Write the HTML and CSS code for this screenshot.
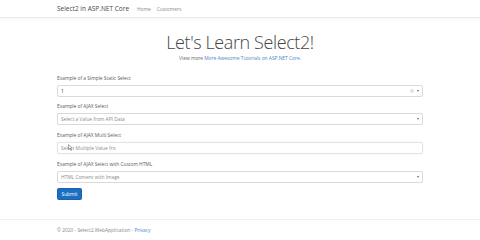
FILE: index.html
```html
<!DOCTYPE html>
<html>
<head>
<meta charset="utf-8">
<link rel="stylesheet" href="styles.css">
</head>
<body>
<header class="navbar">
  <div class="wrap nav-inner">
    <span class="brand">Select2 in ASP.NET Core</span>
    <span class="nav-link">Home</span>
    <span class="nav-link">Customers</span>
  </div>
</header>
<main class="wrap main">
  <h1 class="title">Let's Learn Select2!</h1>
  <p class="lead">View more <span class="link">More Awesome Tutorials on ASP.NET Core.</span></p>
  <div class="group">
    <div class="label">Example of a Simple Static Select</div>
    <div class="select">
      <span class="val">1</span>
      <span class="clear">×</span>
      <span class="arrow"></span>
    </div>
  </div>
  <div class="group">
    <div class="label">Example of AJAX Select</div>
    <div class="select">
      <span class="ph">Select a Value from API Data</span>
      <span class="arrow"></span>
    </div>
  </div>
  <div class="group">
    <div class="label">Example of AJAX Multi Select</div>
    <div class="select multi">
      <span class="ph">Select Multiple Value fro</span>
      <svg class="cursor" width="5" height="7" viewBox="0 0 10 14"><path d="M1 1 L1 11 L3.5 8.5 L5.5 13 L7 12.3 L5 8 L8.5 8 Z" fill="#fff" stroke="#555" stroke-width="1"/></svg>
    </div>
  </div>
  <div class="group">
    <div class="label">Example of AJAX Select with Custom HTML</div>
    <div class="select">
      <span class="ph">HTML Content with Image</span>
      <span class="arrow"></span>
    </div>
  </div>
  <button class="btn">Submit</button>
</main>
<footer class="footer">
  <div class="wrap">© 2020 - Select2.WebApplication - <span class="link">Privacy</span></div>
</footer>
</body>
</html>
```
FILE: styles.css
```css
html, body { margin: 0; padding: 0; background: #fff; }
body {
  font-family: "Open Sans", "Noto Sans", "Liberation Sans", sans-serif;
  font-size: 4.85px;
  color: #555;
  width: 480px;
  height: 240px;
  overflow: hidden;
  position: relative;
}
.wrap { width: 366px; margin-left: 57px; }
.navbar {
  height: 17px;
  border-bottom: 1px solid #ececec;
  box-shadow: 0 1px 3px rgba(0,0,0,0.05);
}
.nav-inner { display: flex; align-items: center; height: 17px; }
.brand { font-size: 6.5px; color: #484848; margin-right: 8px; }
.nav-link { color: #8a8a8a; margin-right: 6px; }
.main { padding-top: 13px; }
.title {
  margin: 0;
  text-align: center;
  font-weight: 300;
  font-size: 18px;
  line-height: 22px;
  letter-spacing: -0.4px;
  color: #444;
}
.lead { margin: 1.6px 0 13px; text-align: center; color: #666; line-height: 7px; }
.link { color: #4a86c8; }
.group { margin-bottom: 6.7px; }
.label { color: #5a5a5a; line-height: 7px; margin-bottom: 3px; }
.select {
  position: relative;
  height: 12px;
  border: 1px solid #dadada;
  border-radius: 2px;
  display: flex;
  align-items: center;
  padding-left: 3px;
  padding-right: 3px;
  box-sizing: border-box;
}
.select.multi { border-color: #e4e4e4; box-shadow: 0 0 2px rgba(0,0,0,0.07); }
.val { color: #444; flex: 1; }
.ph { color: #8c8c8c; flex: 1; }
.clear {
  width: 4px; height: 4px; border-radius: 50%;
  background: #ddd; color: #fff; font-size: 4px; line-height: 4px;
  text-align: center; margin-right: 3px; overflow: hidden;
}
.arrow {
  width: 0; height: 0;
  border-left: 1.5px solid transparent;
  border-right: 1.5px solid transparent;
  border-top: 2px solid #666;
}
.cursor { position: absolute; left: 10px; top: 1px; }
.btn {
  font-family: inherit;
  font-size: 4.85px;
  color: #fff;
  background: #1b6ec2;
  border: 1px solid #1861ac;
  border-radius: 1.5px;
  height: 12px;
  width: 25px;
  padding: 0;
  margin-top: -1px;
  display: block;
}
.footer {
  position: absolute;
  left: 0; right: 0;
  top: 219px;
  border-top: 1px solid #f0f0f0;
  height: 21px;
  line-height: 21px;
  color: #888;
}
```
